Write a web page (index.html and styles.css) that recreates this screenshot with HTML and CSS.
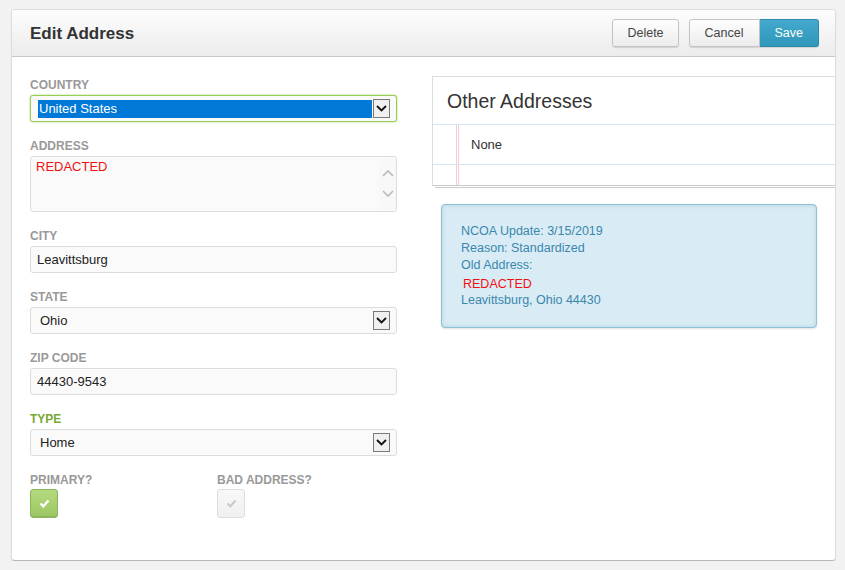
FILE: index.html
```html
<!DOCTYPE html>
<html lang="en">
<head>
    <meta charset="UTF-8">
    <title>Edit Address</title>
    <link rel="stylesheet" href="styles.css">
</head>
<body>
    <div class="card">
        <div class="card-head">
            <h1 class="card-title">Edit Address</h1>
            <div class="actions">
                <button class="btn">Delete</button>
                <div class="btn-group">
                    <button class="btn">Cancel</button>
                    <button class="btn btn-primary">Save</button>
                </div>
            </div>
        </div>

        <div class="card-body">
            <div class="form">
                <div class="field">
                    <label class="field-label">Country</label>
                    <div class="select focused">
                        <span class="select-value selected">United States</span>
                        <span class="select-arrow">
                            <svg width="11" height="7" viewBox="0 0 11 7"><path d="M1 1l4.5 4.5L10 1" fill="none" stroke="#111" stroke-width="1.8"/></svg>
                        </span>
                    </div>
                </div>
                <div class="field">
                    <label class="field-label">Address</label>
                    <div class="textarea">
                        <span class="redacted">REDACTED</span>
                        <div class="scroll">
                            <svg width="12" height="8" viewBox="0 0 12 8"><path d="M1 7l5-5 5 5" fill="none" stroke="#bbb" stroke-width="1.6"/></svg>
                            <svg width="12" height="8" viewBox="0 0 12 8"><path d="M1 1l5 5 5-5" fill="none" stroke="#bbb" stroke-width="1.6"/></svg>
                        </div>
                    </div>
                </div>
                <div class="field">
                    <label class="field-label">City</label>
                    <input class="input" type="text" value="Leavittsburg">
                </div>
                <div class="field">
                    <label class="field-label">State</label>
                    <div class="select">
                        <span class="select-value">Ohio</span>
                        <span class="select-arrow">
                            <svg width="11" height="7" viewBox="0 0 11 7"><path d="M1 1l4.5 4.5L10 1" fill="none" stroke="#111" stroke-width="1.8"/></svg>
                        </span>
                    </div>
                </div>
                <div class="field">
                    <label class="field-label">Zip Code</label>
                    <input class="input" type="text" value="44430-9543">
                </div>
                <div class="field">
                    <label class="field-label required">Type</label>
                    <div class="select">
                        <span class="select-value">Home</span>
                        <span class="select-arrow">
                            <svg width="11" height="7" viewBox="0 0 11 7"><path d="M1 1l4.5 4.5L10 1" fill="none" stroke="#111" stroke-width="1.8"/></svg>
                        </span>
                    </div>
                </div>
                <div class="checks">
                    <div class="field">
                        <label class="field-label">Primary?</label>
                        <span class="checkbox checked">
                            <svg width="11" height="9" viewBox="0 0 11 9"><path d="M1.5 4.5l2.8 2.8L9.5 1.5" fill="none" stroke="#fff" stroke-width="2.4"/></svg>
                        </span>
                    </div>
                    <div class="field">
                        <label class="field-label">Bad Address?</label>
                        <span class="checkbox">
                            <svg width="11" height="9" viewBox="0 0 11 9"><path d="M1.5 4.5l2.8 2.8L9.5 1.5" fill="none" stroke="#c8c8c8" stroke-width="2"/></svg>
                        </span>
                    </div>
                </div>
            </div>

            <div class="aside">
                <div class="notebook">
                    <div class="notebook-title">Other Addresses</div>
                    <div class="notebook-row">None</div>
                    <div class="notebook-row"></div>
                </div>
                <div class="alert">
                    <div>NCOA Update: 3/15/2019</div>
                    <div>Reason: Standardized</div>
                    <div>Old Address:</div>
                    <div class="redacted alert-redacted">REDACTED</div>
                    <div>Leavittsburg, Ohio 44430</div>
                </div>
            </div>
        </div>
    </div>
</body>
</html>
```

FILE: styles.css
```css
* {
    margin: 0;
    padding: 0;
    box-sizing: border-box;
}
body {
    background-color: #f2f2f2;
    font-family: "Liberation Sans", Arial, sans-serif;
    font-size: 13px;
    color: #333;
    padding: 9px 9px 0 11px;
}

.card {
    width: 825px;
    height: 552px;
    background-color: #fff;
    border: 1px solid #dcdcdc;
    border-bottom-color: #b8b8b8;
    border-radius: 4px;
    box-shadow: 0 1px 1px rgba(0, 0, 0, 0.08);
    overflow: hidden;
}
.card-head {
    display: flex;
    align-items: center;
    justify-content: space-between;
    height: 47px;
    padding: 0 16px 0 18px;
    background: linear-gradient(#fdfdfd, #ececec);
    border-bottom: 1px solid #c8c8c8;
}
.card-title {
    font-size: 17px;
    font-weight: bold;
    color: #333;
    padding-top: 1px;
}
.actions {
    display: flex;
    gap: 10px;
    margin-top: -1px;
}
.btn-group {
    display: flex;
}
.btn {
    height: 28px;
    padding: 0 14px;
    font-family: inherit;
    font-size: 12.5px;
    color: #444;
    background: linear-gradient(#fefefe, #ececec);
    border: 1px solid #c4c4c4;
    border-radius: 3px;
    box-shadow: 0 1px 1px rgba(0, 0, 0, 0.12);
}
.btn-group .btn:first-child {
    border-radius: 3px 0 0 3px;
    padding: 0 15px;
}
.btn-group .btn:last-child {
    border-radius: 0 3px 3px 0;
    border-left: 0;
    padding: 0 15px;
}
.btn-primary {
    color: #fff;
    background: linear-gradient(#44a9cc, #2f97ba);
    border-color: #2b8bad;
}

.card-body {
    display: flex;
    padding: 19px 0 0 18px;
    gap: 35px;
}
.form {
    width: 367px;
    flex-shrink: 0;
    display: flex;
    flex-direction: column;
    gap: 18px;
    padding-top: 3px;
}
.field {
    display: flex;
    flex-direction: column;
    gap: 3px;
}
.field-label {
    font-size: 12px;
    font-weight: bold;
    text-transform: uppercase;
    color: #999;
    line-height: 13px;
}
.field-label.required {
    color: #7aa834;
}

.input,
.select,
.textarea {
    width: 100%;
    height: 27px;
    border: 1px solid #dcdcdc;
    border-radius: 3px;
    background-color: #fafafa;
    font-family: inherit;
    font-size: 13px;
    color: #222;
}
.input {
    padding: 0 6px;
    outline: none;
}
.select {
    display: flex;
    align-items: center;
    padding: 0 6px 0 9px;
}
.select-value {
    flex: 1;
}
.select-arrow {
    display: flex;
    align-items: center;
    justify-content: center;
    width: 17px;
    height: 19px;
    background-color: #f0f0f0;
    border: 1px solid #7a7a7a;
}
.select.focused {
    border-color: #98cc55;
    box-shadow: 0 0 2px rgba(140, 198, 63, 0.8);
    padding: 0 6px 0 7px;
}
.select-value.selected {
    height: 18px;
    line-height: 18px;
    padding-left: 1px;
    margin-right: 1px;
    background-color: #0078d7;
    color: #fff;
}
.textarea {
    display: flex;
    justify-content: space-between;
    height: 56px;
    padding: 2px 0 0 5px;
}
.scroll {
    display: flex;
    flex-direction: column;
    align-items: center;
    gap: 13px;
    width: 17px;
    padding-top: 10px;
    background-color: #f8f8f8;
}
.redacted {
    color: #f01010;
}

.checks {
    display: flex;
}
.checks .field {
    width: 187px;
    flex-shrink: 0;
    gap: 2px;
}
.checkbox {
    display: flex;
    align-items: center;
    justify-content: center;
    width: 28px;
    height: 29px;
    border: 1px solid #ddd;
    border-radius: 3px;
    background: linear-gradient(#f8f8f8, #f0f0f0);
}
.checkbox.checked {
    border-color: #8db65a;
    background: linear-gradient(#b4da80, #9cc663);
    box-shadow: inset 0 -1px 1px rgba(0, 0, 0, 0.1);
}

.aside {
    flex: 1;
    display: flex;
    flex-direction: column;
}
.notebook {
    border: 1px solid #ddd;
    border-right: 0;
    border-bottom-color: #c8c8c8;
    background: linear-gradient(90deg, transparent 23px, #f2cbd3 23px, #f2cbd3 24px, transparent 24px, transparent 25px, #f2cbd3 25px, #f2cbd3 26px, transparent 26px) 0 48px / 100% 100% no-repeat;
    box-shadow: 2px 2px 0 -1px #fff, 2px 3px 0 -1px #ccc;
}
.notebook-title {
    height: 48px;
    padding: 13px 0 0 14px;
    font-size: 19.5px;
    color: #333;
    background-color: #fff;
    border-bottom: 1px solid #d3e6ef;
}
.notebook-row {
    height: 40px;
    padding: 12px 0 0 38px;
    border-bottom: 1px solid #d3e6ef;
}
.notebook-row:last-child {
    height: 20px;
    border-bottom: 0;
}
.alert {
    margin: 18px 18px 0 9px;
    padding: 18px 19px 18px 19px;
    font-size: 12.5px;
    line-height: 17px;
    color: #3a87ad;
    background-color: #d9ecf5;
    border: 1px solid #8dc1d6;
    border-radius: 4px;
    box-shadow: inset 0 0 4px rgba(58, 135, 173, 0.25), 0 1px 2px rgba(0, 0, 0, 0.12);
}
.alert-redacted {
    padding: 3px 0 0 2px;
    line-height: 15px;
}
```
